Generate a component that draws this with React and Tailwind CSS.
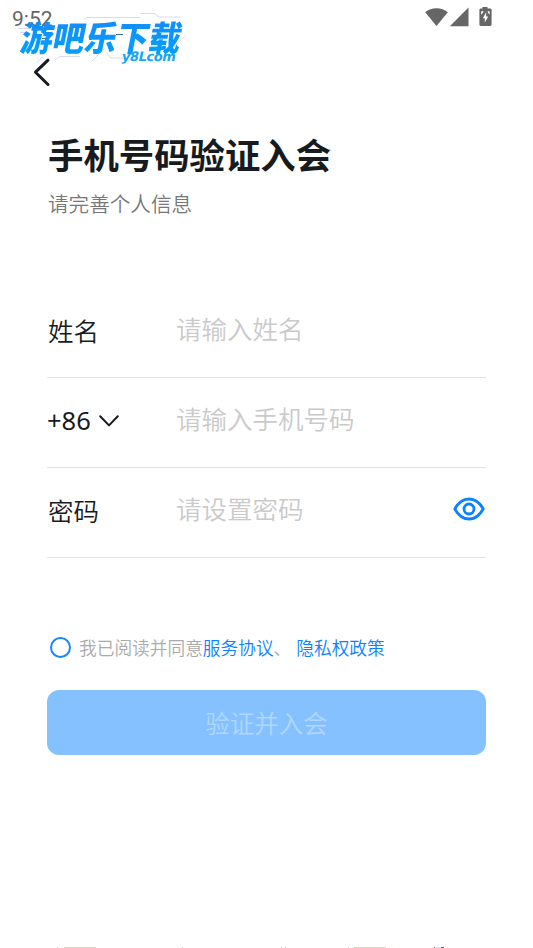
import { useState } from 'react';

const fields = [
  { id: 'name', label: '姓名', placeholder: '请输入姓名' },
  { id: 'phone', label: '+86', placeholder: '请输入手机号码' },
  { id: 'password', label: '密码', placeholder: '请设置密码' },
];

function StatusBar() {
  return (
    <div className="flex h-9 shrink-0 items-center justify-between pl-3 pr-[41px] text-[#666666]">
      <span className="pt-0.5 font-[Roboto] text-[21px] leading-none">9:52</span>
      <svg className="mb-0.5" width="68" height="22" viewBox="0 0 68 22" fill="currentColor">
        <path d="M1.2 6.2C7.5.9 17.5.9 23.8 6.2L12.5 20z" />
        <path d="M44.5 1.5v18.7H25.8z" />
        <path d="M58.5 1h5v1.6h2.7c.8 0 1.4.6 1.4 1.4v14.6c0 .8-.6 1.4-1.4 1.4h-9.4c-.8 0-1.4-.6-1.4-1.4V4c0-.8.6-1.4 1.4-1.4h1.7z" />
        <path d="M62.2 6.2 58.8 12.2h2v4.3l3.4-6h-2z M57.2 5.2h2.2v1l-2.2 2.6z M63.4 5.2h2.2v3.6l-1.2-1.6z" fill="#fff" />
      </svg>
    </div>
  );
}

// Site logo that floats over the status bar
function Watermark() {
  return (
    <div className="pointer-events-none absolute left-[18px] top-2.5 h-[58px] w-[170px]">
      <svg className="absolute inset-0" width="170" height="58" fill="none" stroke="#d9daf3" strokeWidth="1">
        <path d="M66 9.5l3-2h53M122 3.5h14l5 3.500h21M0 18.5h12M2 22.5h8M19 53l5-6M62 46.5H42l-6 4M88 42l5 6h12M156 37l11-11M74 51l12-12" />
        <path d="M24 28.5h5M98 24.5h7" stroke="#3d6a9a" />
      </svg>
      <div className="absolute left-1 top-1.5 -skew-x-12 scale-y-108 whitespace-nowrap bg-linear-to-b from-[#1688f8] to-[#00a2ff] bg-clip-text text-[32px] font-black leading-[40px] text-transparent">
        游吧乐下载
      </div>
      <div className="absolute left-[104px] top-[39px] -skew-x-12 whitespace-nowrap font-['DejaVu_Sans'] text-[13px] font-bold leading-[15px] tracking-[-0.4px] text-[#18a5f5]">
        y8Lcom
      </div>
    </div>
  );
}

function EyeIcon() {
  return (
    <svg width="32" height="24" viewBox="0 0 32 24" fill="none" stroke="#0b82ff" strokeWidth="2.8">
      <path d="M1.8 12C5.3 5.6 10.3 2 16 2s10.7 3.6 14.2 10C26.7 18.4 21.7 22 16 22S5.3 18.4 1.8 12z" strokeLinejoin="round" />
      <circle cx="16" cy="12" r="5" />
    </svg>
  );
}

function Field({ field, showPassword, onTogglePassword }) {
  return (
    <div className="flex h-[90px] items-center border-b border-[#e2e2e2] pb-[7px]">
      <label
        htmlFor={field.id}
        className="flex w-[129px] shrink-0 items-center gap-2 pl-px pt-[3px] text-[25.5px] font-[350] text-[#171b20]"
      >
        {field.id === 'phone' ? (
          <span className="-ml-px font-['Noto_Sans'] font-normal">{field.label}</span>
        ) : (
          field.label
        )}
        {field.id === 'phone' && (
          <svg width="20" height="12" viewBox="0 0 20 12" fill="none" stroke="currentColor" strokeWidth="2" strokeLinecap="round" strokeLinejoin="round">
            <path d="M1.2 1.2 10 10.4l8.8-9.2" />
          </svg>
        )}
      </label>
      <input
        id={field.id}
        type={field.id === 'password' && !showPassword ? 'password' : 'text'}
        placeholder={field.placeholder}
        className="h-10 min-w-0 flex-1 bg-transparent pb-[3px] text-[25.5px] font-[350] text-[#171b20] outline-none placeholder:text-[#cacaca]"
      />
      {field.id === 'password' && (
        <button type="button" aria-label="显示密码" className="mr-px" onClick={onTogglePassword}>
          <EyeIcon />
        </button>
      )}
    </div>
  );
}

// Top edge of the row just below the fold
function BottomEdge() {
  return (
    <svg className="mt-auto block shrink-0" width="533" height="1" shapeRendering="crispEdges">
      <path d="M57 .5h1M182 .5h1M281 .5h1M285 .5h1M348 .5h1" stroke="#c9c9c9" />
      <path d="M64 .5h32M354 .5h32" stroke="#ddd6c3" />
      <path d="M434 .5h1M441 .5h3" stroke="#666" />
      <path d="M436 .5h4" stroke="#cdf5f0" />
    </svg>
  );
}

export default function App() {
  const [agreed, setAgreed] = useState(false);
  const [showPassword, setShowPassword] = useState(false);

  return (
    <div className="relative flex h-screen w-full flex-col overflow-hidden bg-white font-['Noto_Sans_CJK_SC',sans-serif]">
      <StatusBar />
      <Watermark />

      <header className="flex h-[72px] shrink-0 items-center px-8 pb-px">
        <button type="button" aria-label="返回">
          <svg width="20" height="30" viewBox="0 0 20 30" fill="none" stroke="#171b20" strokeWidth="3" strokeLinecap="round" strokeLinejoin="round">
            <path d="M16 3.2 3.5 15.2 16 27.5" />
          </svg>
        </button>
      </header>

      <main className="px-[47px]">
        <h1 className="mt-5 pl-px text-[35.4px] font-bold leading-[52px] text-[#171b20]">手机号码验证入会</h1>
        <p className="mt-2 pl-px text-[20.6px] font-[350] leading-[30px] text-[#777777]">请完善个人信息</p>

        <form className="mt-[70px]">
          {fields.map((field) => (
            <Field
              key={field.id}
              field={field}
              showPassword={showPassword}
              onTogglePassword={() => setShowPassword(!showPassword)}
            />
          ))}

          <div className="mt-[74px] flex h-[30px] items-center text-[17.7px] font-[350] text-[#aaaaaa]">
            <button
              type="button"
              aria-label="同意协议"
              onClick={() => setAgreed(!agreed)}
              className={`ml-[3px] mr-2 size-[21px] shrink-0 rounded-full border-[2.5px] border-[#1688ff] ${agreed ? 'bg-[#1688ff]' : ''}`}
            />
            <span>我已阅读并同意</span>
            <a className="text-[#0b82ff]">服务协议</a>
            <span>、</span>
            <a className="ml-[5px] text-[#0b82ff]">隐私权政策</a>
          </div>

          <button type="button" className="mt-7 h-[65px] w-full rounded-xl bg-[#86c1ff] pt-0.5 text-[24.5px] font-[350] text-[#b0d7ff]">
            验证并入会
          </button>
        </form>
      </main>

      <BottomEdge />
    </div>
  );
}
